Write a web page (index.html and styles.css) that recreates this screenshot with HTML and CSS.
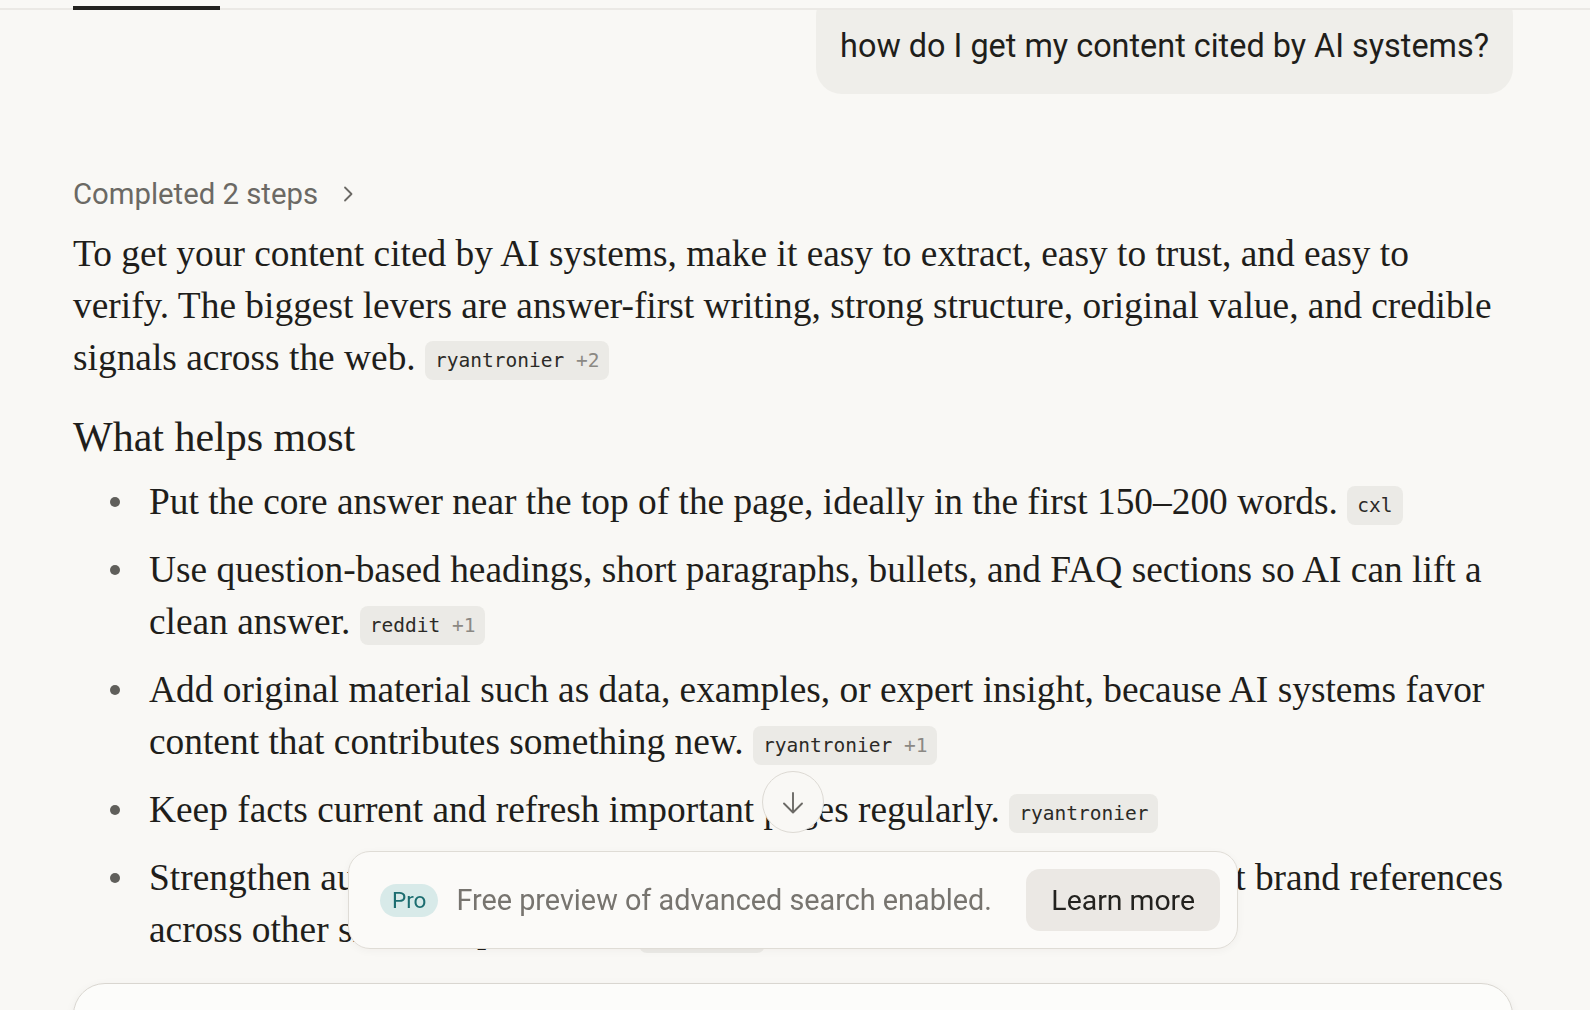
FILE: index.html
```html
<!DOCTYPE html>
<html lang="en">
<head>
<meta charset="utf-8">
<title>how do I get my content cited by AI systems?</title>
<link rel="stylesheet" href="styles.css">
</head>
<body>
<div class="tabs"><div class="tab is-active"></div></div>

<main class="thread">
  <div class="column">
    <div class="query-row">
      <div class="query">how do I get my content cited by AI systems?</div>
    </div>

    <button class="steps" type="button">
      <span>Completed 2 steps</span>
      <svg class="chev" width="10" height="16" viewBox="0 0 10 16" aria-hidden="true"><path d="M2 1.5 8.5 8 2 14.5"/></svg>
    </button>

    <div class="answer">
      <p>To get your content cited by AI systems, make it easy to extract, easy to trust, and easy to verify. The biggest levers are answer-first writing, strong structure, original value, and credible signals across the web. <span class="cite">ryantronier <span class="more">+2</span></span></p>

      <h2>What helps most</h2>

      <ul class="points">
        <li><span class="dot"></span><span class="item">Put the core answer near the top of the page, ideally in the first 150–200 words. <span class="cite">cxl</span></span></li>
        <li><span class="dot"></span><span class="item">Use question-based headings, short paragraphs, bullets, and FAQ sections so AI can lift a clean answer. <span class="cite">reddit <span class="more">+1</span></span></span></li>
        <li><span class="dot"></span><span class="item">Add original material such as data, examples, or expert insight, because AI systems favor content that contributes something new. <span class="cite">ryantronier <span class="more">+1</span></span></span></li>
        <li><span class="dot"></span><span class="item">Keep facts current and refresh important pages regularly. <span class="cite">ryantronier</span></span></li>
        <li><span class="dot"></span><span class="item">Strengthen authority through reviews, citations, backlinks, and consistent brand references across other sites and platforms. <span class="cite">reddit <span class="more">+1</span></span></span></li>
      </ul>
    </div>
  </div>
</main>

<div class="dock">
  <button class="scroll-down" type="button" aria-label="Scroll to bottom">
    <svg width="22" height="22" viewBox="0 0 22 22" aria-hidden="true"><path d="M11 1v19M2 11.5l9 9 9-9"/></svg>
  </button>
  <div class="toast">
    <span class="pro">Pro</span>
    <span class="toast-msg">Free preview of advanced search enabled.</span>
    <button class="learn" type="button">Learn more</button>
  </div>
  <div class="composer"></div>
</div>
</body>
</html>
```

FILE: styles.css
```css
html, body {
  margin: 0;
  height: 100%;
}

body {
  background: #f9f8f5;
  color: #1f1e1b;
  overflow: hidden;
  font-family: Roboto, "Liberation Sans", sans-serif;
}

button {
  font: inherit;
  color: inherit;
  cursor: pointer;
}

/* tab strip along the top */
.tabs {
  display: flex;
  height: 8px;
  padding-left: 73px;
  border-bottom: 2px solid #ebe9e5;
}

.tab.is-active {
  width: 147px;
  height: 4px;
  margin-top: 6px;
  background: #22211e;
}

/* scrolling thread */
.thread {
  height: 1000px;
  overflow: hidden;
}

.column {
  width: 1440px;
  margin-left: 73px;
}

.query-row {
  display: flex;
  justify-content: flex-end;
  margin-top: -20px;
}

.query {
  background: #efeeea;
  border-radius: 26px;
  padding: 37px 24px 29px;
  font-size: 32.4px;
  line-height: 38px;
  color: #1f1e1b;
}

.steps {
  display: flex;
  align-items: center;
  gap: 25px;
  margin-top: 82px;
  padding: 0;
  border: 0;
  background: none;
  font-size: 29.3px;
  line-height: 36px;
  color: #6b6964;
}

.chev path {
  fill: none;
  stroke: #6b6964;
  stroke-width: 1.8;
  stroke-linecap: round;
  stroke-linejoin: round;
}

/* answer body */
.answer {
  font-family: "Liberation Serif", "Times New Roman", serif;
  color: #1f1e1b;
}

.answer p {
  margin: 16px 0 0;
  font-size: 37.4px;
  line-height: 51.75px;
}

.answer h2 {
  margin: 26px 0 0;
  font-size: 42px;
  line-height: 56px;
  font-weight: 400;
}

.points {
  list-style: none;
  margin: 11px 0 0;
  padding: 0;
}

.points li {
  display: flex;
  align-items: flex-start;
  font-size: 37.4px;
  line-height: 52px;
}

.points li + li {
  margin-top: 16px;
}

.dot {
  flex: none;
  width: 10px;
  height: 10px;
  margin: 21px 29px 0 37px;
  border-radius: 50%;
  background: #605f5b;
}

.item {
  flex: 1;
}

/* inline source chips */
.cite {
  display: inline-block;
  vertical-align: middle;
  padding: 9px 10px;
  border-radius: 8px;
  background: #ebeae6;
  font-family: "DejaVu Sans Mono", "Liberation Mono", monospace;
  font-size: 19.5px;
  line-height: 21px;
  color: #2b2a27;
  white-space: nowrap;
}

.cite .more {
  color: #8b8984;
}

/* bottom dock: scroll button, notice and composer */
.dock {
  position: fixed;
  left: 73px;
  bottom: -83px;
  width: 1440px;
  display: flex;
  flex-direction: column;
  align-items: center;
}

.scroll-down {
  width: 62px;
  height: 62px;
  padding: 0;
  border-radius: 50%;
  border: 1.5px solid #dcd9d3;
  background: #f9f8f5;
  display: flex;
  align-items: center;
  justify-content: center;
}

.scroll-down svg {
  margin-top: 2px;
}

.scroll-down path {
  fill: none;
  stroke: #6c6a66;
  stroke-width: 1.9;
  stroke-linecap: round;
  stroke-linejoin: round;
}

.toast {
  box-sizing: border-box;
  width: 890px;
  height: 98px;
  margin-top: 18px;
  padding: 0 17px 0 31px;
  display: flex;
  align-items: center;
  border: 1.5px solid #dfdcd6;
  border-radius: 22px;
  background: #fbfaf8;
  box-shadow: 0 2px 8px rgba(40, 35, 25, 0.04);
}

.pro {
  height: 33px;
  padding: 0 12px;
  border-radius: 17px;
  background: #d8eae9;
  color: #1c6d70;
  font-size: 22.5px;
  line-height: 33px;
}

.toast-msg {
  margin-left: 18px;
  font-size: 28.8px;
  color: #77746f;
}

.learn {
  margin-left: auto;
  height: 62px;
  padding: 0 25px;
  border: 0;
  border-radius: 14px;
  background: #ebe8e4;
  font-size: 28.4px;
  color: #23221f;
}

.composer {
  box-sizing: border-box;
  width: 100%;
  height: 110px;
  margin-top: 34px;
  border: 1.5px solid #d9d6d0;
  border-radius: 32px;
  background: #fcfcfa;
  box-shadow: 0 2px 10px rgba(40, 35, 25, 0.05);
}
```
